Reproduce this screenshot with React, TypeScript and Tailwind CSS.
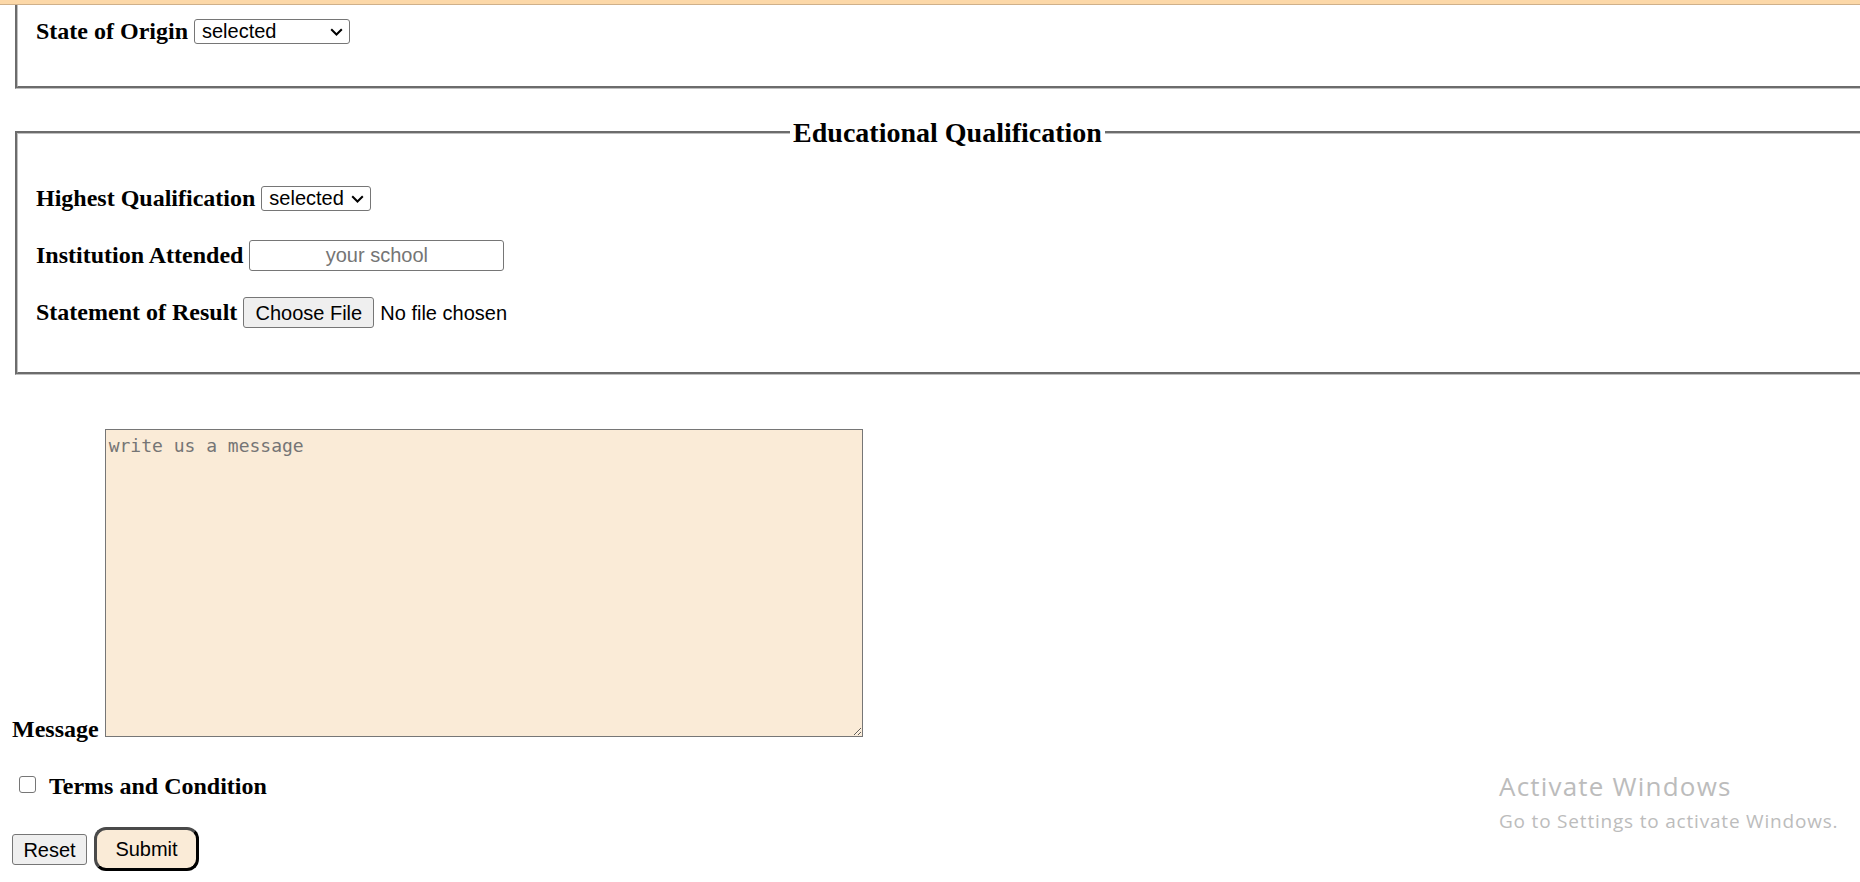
import React from "react";

function Chevron() {
  return (
    <svg width="13" height="8" viewBox="0 0 13 8" className="pointer-events-none absolute right-[7px] top-1/2 -translate-y-1/2">
      <path d="M1.2 1.2 L6.5 6.5 L11.8 1.2" fill="none" stroke="#000" strokeWidth="2" />
    </svg>
  );
}

function Select({ w }: { w: string }) {
  return (
    <div className={`relative ml-[6px] ${w} h-[25px]`}>
      <select className="appearance-none w-full h-full border border-[#767676] rounded-[3px] bg-white pl-[7px] text-[20px] leading-[23px] text-black font-['Liberation_Sans',Arial,sans-serif] outline-none">
        <option>selected</option>
      </select>
      <Chevron />
    </div>
  );
}

export default function App() {
  const label = "text-[24px] font-bold leading-[27px] text-black whitespace-nowrap";
  return (
    <div className="relative w-[1860px] h-[882px] overflow-hidden bg-white font-['Liberation_Serif','Times_New_Roman',serif] text-black">
      <div className="h-[5px] bg-[#fcd8a8] border-b border-[#cfb08a]" />
      <div className="px-[12px]">
        <fieldset className="ml-[3px] w-[1865px] border-[3px] border-t-0 [border-style:groove] border-[#c0c0c0] px-[18px] pt-[11px] pb-[39px]">
          <div className="flex items-center h-[31px]">
            <span className={label}>State of Origin</span>
            <Select w="w-[156px]" />
          </div>
        </fieldset>

        <fieldset className="mt-[28px] ml-[3px] w-[1865px] border-[3px] [border-style:groove] border-[#c0c0c0] px-[18px] pt-0 pb-[44px]">
          <legend className="mx-auto px-[3px] text-[28px] font-bold leading-[31px]">Educational Qualification</legend>
          <div className="pt-[35px]">
            <div className="flex items-center h-[31px]">
              <span className={label}>Highest Qualification</span>
              <Select w="w-[110px]" />
            </div>
            <div className="flex items-center h-[31px] mt-[26px]">
              <span className={label}>Institution Attended</span>
              <input
                type="text"
                placeholder="your school"
                className="ml-[6px] w-[255px] h-[31px] border border-[#767676] rounded-[3px] bg-white text-center text-[20px] font-['Liberation_Sans',Arial,sans-serif] placeholder:text-[#757575] outline-none"
              />
            </div>
            <div className="flex items-center h-[31px] mt-[26px]">
              <span className={label}>Statement of Result</span>
              <button
                type="button"
                className="ml-[6px] w-[131px] h-[31px] border border-[#767676] rounded-[3px] bg-[#efefef] text-[20px] text-black font-['Liberation_Sans',Arial,sans-serif]"
              >
                Choose File
              </button>
              <span className="ml-[6px] text-[20px] font-['Liberation_Sans',Arial,sans-serif] whitespace-nowrap">No file chosen</span>
            </div>
          </div>
        </fieldset>

        <div className="mt-[54px] flex items-end">
          <span className={`${label} mb-[-6px]`}>Message</span>
          <textarea
            placeholder="write us a message"
            className="ml-[6px] w-[758px] h-[308px] border border-[#767676] bg-[#faebd7] pt-[5px] pl-[3px] text-[18px] leading-[21px] font-['DejaVu_Sans_Mono',monospace] placeholder:text-[#757575] outline-none"
          />
        </div>

        <div className="mt-[36px] flex items-start h-[27px]">
          <input
            type="checkbox"
            className="appearance-none ml-[7px] mt-[3px] w-[17px] h-[17px] border-[1.5px] border-[#767676] rounded-[3px] bg-white"
          />
          <span className={`${label} ml-[13px]`}>Terms and Condition</span>
        </div>

        <div className="mt-[27px] flex items-center gap-[7px]">
          <button
            type="reset"
            className="w-[75px] h-[31px] border border-[#767676] rounded-[3px] bg-[#efefef] text-[20px] text-black font-['Liberation_Sans',Arial,sans-serif]"
          >
            Reset
          </button>
          <button
            type="submit"
            className="w-[105px] h-[44px] rounded-[12px] border-[3px] border-t-[#4a4a4a] border-l-[#4a4a4a] border-r-black border-b-black bg-[#faebd7] text-[20px] text-black font-['Liberation_Sans',Arial,sans-serif]"
          >
            Submit
          </button>
        </div>
      </div>

      <div className="absolute left-[1499px] top-[771px] text-[#bcbcbc] font-['Open_Sans','Noto_Sans',sans-serif] pointer-events-none">
        <div className="text-[26px] leading-[30px] tracking-[1.2px] whitespace-nowrap">Activate Windows</div>
        <div className="mt-[8px] text-[19px] leading-[24px] tracking-[0.8px] whitespace-nowrap">Go to Settings to activate Windows.</div>
      </div>
    </div>
  );
}
